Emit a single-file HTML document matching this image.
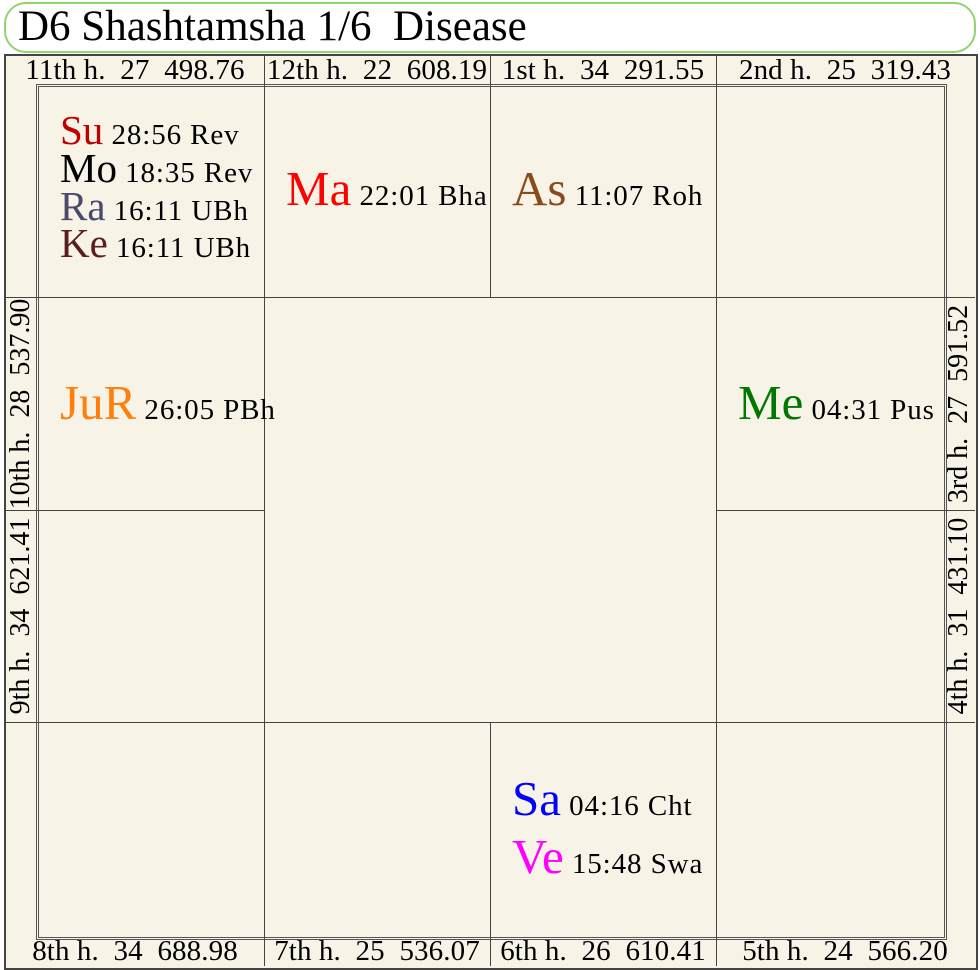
<!DOCTYPE html>
<html><head><meta charset="utf-8"><style>
body{margin:0;width:980px;height:970px;background:#fff;font-family:"Liberation Serif",serif;position:relative;overflow:hidden}
.a{position:absolute;white-space:nowrap}
#title{left:4px;top:2px;width:968px;height:47px;border:2px solid #8fd46e;border-radius:22px;background:#fff}
#title span{position:absolute;left:12px;top:-2px;font-size:43px;color:#000}
#chart{left:4px;top:54px;width:970px;height:912px;border:2px solid #444;background:#f8f3e7}
.h{position:absolute;background:#444}
.lbl{position:absolute;font-size:29px;letter-spacing:0.1px;color:#000;text-align:center;white-space:nowrap;line-height:30px}
.v{position:absolute;font-size:28px;width:212px;text-align:center;transform:rotate(-90deg);white-space:nowrap;line-height:30px}
.p{position:absolute;white-space:nowrap;font-size:29px;letter-spacing:0.9px;color:#000}
.p b{font-weight:normal;letter-spacing:0}
</style></head><body>
<div class="a" id="title"><span>D6 Shashtamsha 1/6&nbsp; Disease</span></div>
<div class="a" id="chart"></div>
<div class="a" style="left:36px;top:84px;width:905px;height:850px;border:3px double #555"></div>
<div class="h" style="left:264px;top:86px;width:1px;height:850px"></div>
<div class="h" style="left:716px;top:86px;width:1px;height:850px"></div>
<div class="h" style="left:490px;top:86px;width:1px;height:211px"></div>
<div class="h" style="left:490px;top:722px;width:1px;height:214px"></div>
<div class="h" style="left:38px;top:297px;width:905px;height:1px"></div>
<div class="h" style="left:38px;top:722px;width:905px;height:1px"></div>
<div class="h" style="left:38px;top:510px;width:226px;height:1px"></div>
<div class="h" style="left:716px;top:510px;width:227px;height:1px"></div>
<div class="h" style="left:264px;top:56px;width:1px;height:30px"></div>
<div class="h" style="left:490px;top:56px;width:1px;height:30px"></div>
<div class="h" style="left:716px;top:56px;width:1px;height:30px"></div>
<div class="h" style="left:264px;top:936px;width:1px;height:30px"></div>
<div class="h" style="left:490px;top:936px;width:1px;height:30px"></div>
<div class="h" style="left:716px;top:936px;width:1px;height:30px"></div>
<div class="h" style="left:6px;top:510px;width:32px;height:1px"></div>
<div class="h" style="left:943px;top:510px;width:32px;height:1px"></div>
<div class="h" style="left:6px;top:297px;width:32px;height:1px"></div>
<div class="h" style="left:943px;top:297px;width:32px;height:1px"></div>
<div class="h" style="left:6px;top:722px;width:32px;height:1px"></div>
<div class="h" style="left:943px;top:722px;width:32px;height:1px"></div>
<div class="lbl" style="left:6px;width:258px;top:55px">11th h.&nbsp; 27&nbsp; 498.76</div>
<div class="lbl" style="left:264px;width:226px;top:55px">12th h.&nbsp; 22&nbsp; 608.19</div>
<div class="lbl" style="left:490px;width:226px;top:55px">1st h.&nbsp; 34&nbsp; 291.55</div>
<div class="lbl" style="left:716px;width:258px;top:55px">2nd h.&nbsp; 25&nbsp; 319.43</div>
<div class="lbl" style="left:6px;width:258px;top:936px">8th h.&nbsp; 34&nbsp; 688.98</div>
<div class="lbl" style="left:264px;width:226px;top:936px">7th h.&nbsp; 25&nbsp; 536.07</div>
<div class="lbl" style="left:490px;width:226px;top:936px">6th h.&nbsp; 26&nbsp; 610.41</div>
<div class="lbl" style="left:716px;width:258px;top:936px">5th h.&nbsp; 24&nbsp; 566.20</div>
<div class="v" style="left:-85px;top:389px">10th h.&nbsp; 28&nbsp; 537.90</div>
<div class="v" style="left:-85px;top:601px">9th h.&nbsp; 34&nbsp; 621.41</div>
<div class="v" style="left:853px;top:389px">3rd h.&nbsp; 27&nbsp; 591.52</div>
<div class="v" style="left:853px;top:601px">4th h.&nbsp; 31&nbsp; 431.10</div>
<div class="p" style="left:60px;top:106px"><b style="font-size:41px;color:#c00000">Su</b> 28:56 Rev</div>
<div class="p" style="left:60px;top:144px"><b style="font-size:41px;color:#000">Mo</b> 18:35 Rev</div>
<div class="p" style="left:60px;top:182px"><b style="font-size:41px;color:#4a4a6e">Ra</b> 16:11 UBh</div>
<div class="p" style="left:60px;top:219px"><b style="font-size:41px;color:#5a1e1e">Ke</b> 16:11 UBh</div>
<div class="p" style="left:286px;top:160px"><b style="font-size:49px;color:#ff0000">Ma</b> 22:01 Bha</div>
<div class="p" style="left:512px;top:160px"><b style="font-size:49px;color:#8b4a1e">As</b> 11:07 Roh</div>
<div class="p" style="left:60px;top:374px"><b style="font-size:49px;color:#ff7f0e">JuR</b> 26:05 PBh</div>
<div class="p" style="left:738px;top:374px"><b style="font-size:49px;color:#007800">Me</b> 04:31 Pus</div>
<div class="p" style="left:512px;top:770px"><b style="font-size:49px;color:#0000ff">Sa</b> 04:16 Cht</div>
<div class="p" style="left:512px;top:828px"><b style="font-size:49px;color:#ff00ff">Ve</b> 15:48 Swa</div>
</body></html>
